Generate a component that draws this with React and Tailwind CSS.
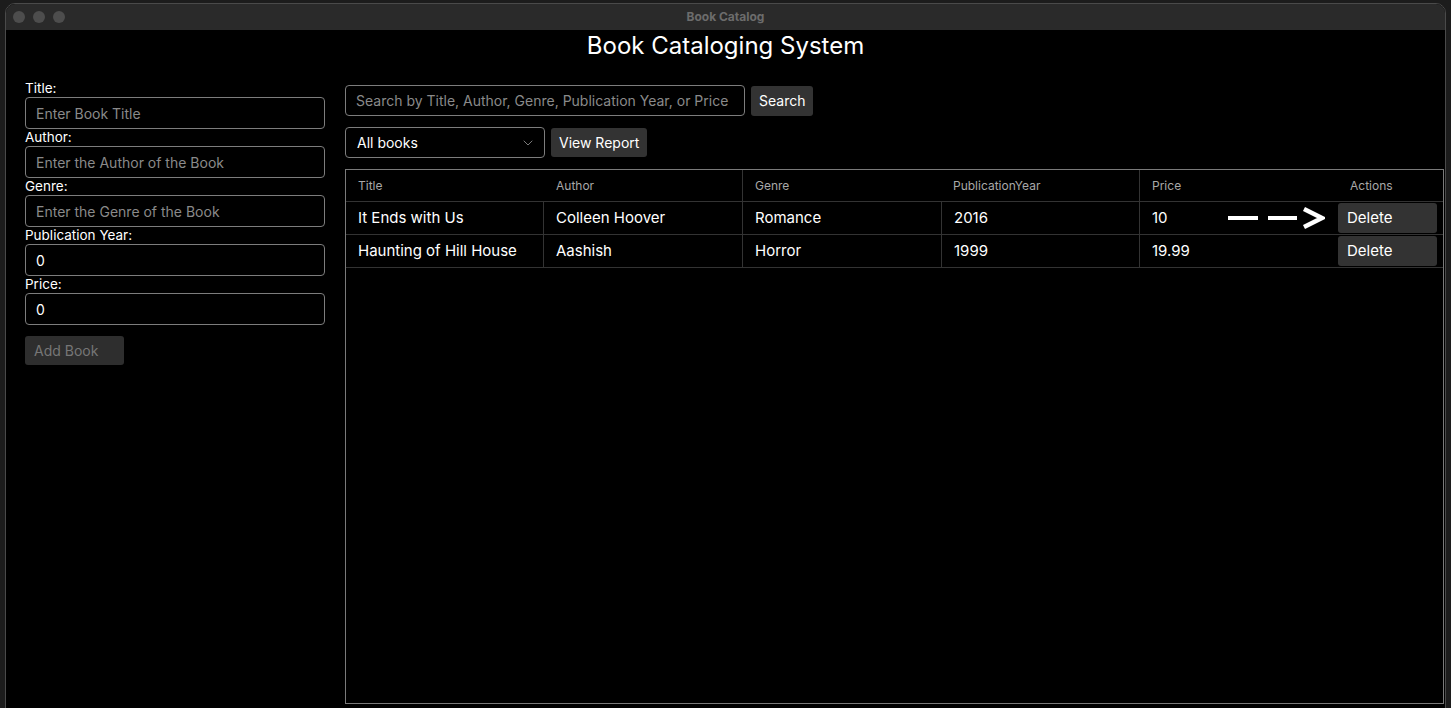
import React from 'react';
import { ChevronDown } from 'lucide-react';

const fields = [
  { label: 'Title:', placeholder: 'Enter Book Title' },
  { label: 'Author:', placeholder: 'Enter the Author of the Book' },
  { label: 'Genre:', placeholder: 'Enter the Genre of the Book' },
  { label: 'Publication Year:', value: '0' },
  { label: 'Price:', value: '0' },
];

const books = [
  { title: 'It Ends with Us', author: 'Colleen Hoover', genre: 'Romance', year: '2016', price: '10', arrow: true },
  { title: 'Haunting of Hill House', author: 'Aashish', genre: 'Horror', year: '1999', price: '19.99' },
];

const Arrow = () => (
  <svg width="97" height="22" viewBox="0 0 97 22" className="ml-auto mr-[13px]">
    <rect x="0" y="9" width="30" height="4" fill="#fff" />
    <rect x="40" y="9" width="29" height="4" fill="#fff" />
    <polyline points="76,2 94,11 76,20" fill="none" stroke="#fff" strokeWidth="4.5" strokeLinejoin="miter" />
  </svg>
);

const App = () => {
  return (
    <div className="w-[1451px] h-[708px] overflow-hidden bg-[#1c1c1c] pt-[3px] pl-[5px] font-['Inter',sans-serif]">
      <div className="w-[1441px] h-[720px] rounded-t-[10px] border border-[#4a4a4a] bg-black overflow-hidden">
        {/* title bar */}
        <div className="relative h-[26px] bg-[#2a2a2a] flex items-center">
          <div className="flex gap-[8px] pl-[7px]">
            <span className="w-[12px] h-[12px] rounded-full bg-[#4d4d4d]" />
            <span className="w-[12px] h-[12px] rounded-full bg-[#4d4d4d]" />
            <span className="w-[12px] h-[12px] rounded-full bg-[#4d4d4d]" />
          </div>
          <div className="absolute inset-0 flex items-center justify-center text-[12px] font-bold text-[#6c6c6c]">
            Book Catalog
          </div>
        </div>

        <h1 className="text-center text-white text-[24px] leading-[30px] mt-[1px]">Book Cataloging System</h1>

        <div className="flex items-start pl-[19px]">
          {/* left form */}
          <div className="w-[300px] mt-[19px] flex flex-col">
            {fields.map((f) => (
              <div key={f.label} className="flex flex-col">
                <label className="text-white text-[13.5px] leading-[17px]">{f.label}</label>
                <div className="h-[32px] border border-[#7d7d7d] rounded-[4px] flex items-center px-[10px] text-[14px]">
                  {f.value ? (
                    <span className="text-white">{f.value}</span>
                  ) : (
                    <span className="text-[#8a8a8a]">{f.placeholder}</span>
                  )}
                </div>
              </div>
            ))}
            <button className="mt-[11px] w-[99px] h-[29px] rounded-[3px] bg-[#2e2e2e] text-[#767676] text-[14px] text-left pl-[9px]">
              Add Book
            </button>
          </div>

          {/* right side */}
          <div className="ml-[20px] mt-[24px] w-[1099px] flex flex-col">
            <div className="flex items-center gap-[6px]">
              <div className="w-[400px] h-[31px] border border-[#7d7d7d] rounded-[4px] flex items-center px-[10px] text-[14px] text-[#8a8a8a]">
                Search by Title, Author, Genre, Publication Year, or Price
              </div>
              <button className="h-[30px] px-[8px] rounded-[3px] bg-[#333] text-white text-[14px]">Search</button>
            </div>
            <div className="flex items-center gap-[6px] mt-[11px]">
              <div className="w-[200px] h-[31px] border border-[#7d7d7d] rounded-[4px] flex items-center pl-[11px] pr-[8px] text-[14px] text-white">
                All books
                <ChevronDown className="ml-auto w-[16px] h-[16px] text-[#9a9a9a]" strokeWidth={1.2} />
              </div>
              <button className="h-[29px] px-[8px] rounded-[3px] bg-[#333] text-white text-[14px]">View Report</button>
            </div>

            {/* table */}
            <div className="mt-[11px] h-[535px] border border-[#7a7a7a] flex flex-col">
              <div className="h-[32px] flex border-b border-[#333] text-[12px] text-[#a8a8a8]">
                <div className="w-[396px] flex items-center pl-[12px]">
                  <span className="w-[198px]">Title</span>
                  <span>Author</span>
                </div>
                <div className="w-[397px] flex items-center pl-[12px] border-l border-[#333]">
                  <span className="w-[198px]">Genre</span>
                  <span>PublicationYear</span>
                </div>
                <div className="flex-1 flex items-center pl-[12px] border-l border-[#333]">
                  <span className="w-[198px]">Price</span>
                  <span>Actions</span>
                </div>
              </div>
              {books.map((b) => (
                <div key={b.title} className="h-[33px] flex border-b border-[#333] text-[15px] text-white">
                  <div className="w-[197px] flex items-center pl-[12px]">{b.title}</div>
                  <div className="w-[199px] flex items-center pl-[12px] border-l border-[#333]">{b.author}</div>
                  <div className="w-[199px] flex items-center pl-[12px] border-l border-[#333]">{b.genre}</div>
                  <div className="w-[198px] flex items-center pl-[12px] border-l border-[#333]">{b.year}</div>
                  <div className="w-[199px] flex items-center pl-[12px] border-l border-[#333]">
                    {b.price}
                    {b.arrow && <Arrow />}
                  </div>
                  <div className="flex-1 flex items-center">
                    <button className="w-[99px] h-[30px] rounded-[3px] bg-[#333] text-white text-[15px] text-left pl-[9px]">
                      Delete
                    </button>
                  </div>
                </div>
              ))}
            </div>
          </div>
        </div>
      </div>
    </div>
  );
};

export default App;
